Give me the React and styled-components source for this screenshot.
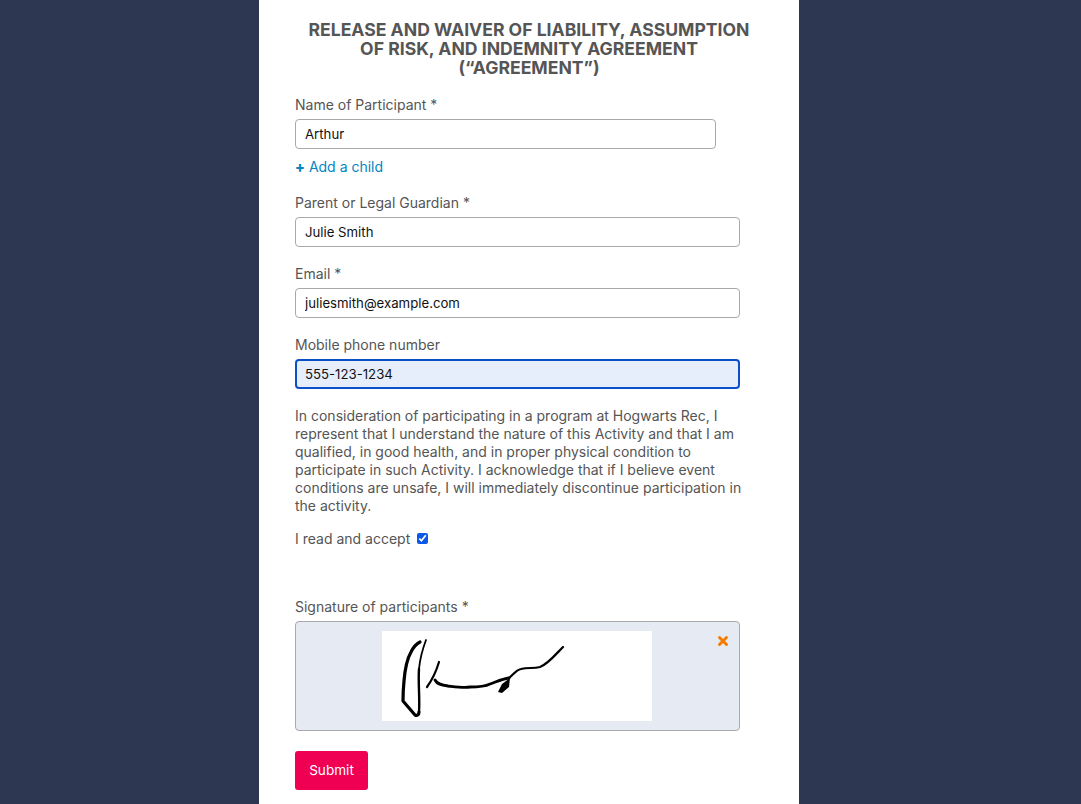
import { useState } from 'react';
import styled, { createGlobalStyle } from 'styled-components';

const GlobalStyle = createGlobalStyle`
  * {
    box-sizing: border-box;
  }
  html, body {
    margin: 0;
    height: 100%;
  }
  body {
    background: #2d3752;
    font-family: Inter, "Liberation Sans", sans-serif;
    overflow: hidden;
  }
`;

const Page = styled.div`
  display: flex;
  justify-content: center;
  height: 804px;
  padding-right: 23px;
  overflow: hidden;
`;

const Card = styled.form`
  width: 540px;
  background: #fff;
  padding: 20px 36px 0;
`;

const Title = styled.h1`
  margin: 0 0 19px;
  padding: 0 6px;
  font-size: 17.6px;
  line-height: 19px;
  font-weight: 700;
  text-align: center;
  color: #555;
`;

const Body = styled.div`
  padding-right: 23px;
`;

const Field = styled.div`
  margin-bottom: 18px;
`;

const Label = styled.label`
  display: block;
  font-size: 14px;
  line-height: 18px;
  color: #555;
  margin-bottom: 5px;
`;

const Input = styled.input`
  display: block;
  width: ${(p) => (p.$short ? '421px' : '100%')};
  height: 30px;
  padding: 0 ${(p) => (p.$active ? 8 : 9)}px;
  font-family: inherit;
  font-size: 13.2px;
  color: #111;
  background: ${(p) => (p.$active ? '#e6edfb' : '#fff')};
  border: ${(p) => (p.$active ? '2px solid #0b50c8' : '1px solid #a9a9a9')};
  border-radius: 4px;
  outline: none;
`;

const AddChild = styled.a`
  display: block;
  margin-top: 9px;
  font-size: 14px;
  line-height: 18px;
  color: #0286c3;
  text-decoration: none;
  b {
    font-size: 14.5px;
    font-weight: 800;
  }
`;

const Terms = styled.p`
  margin: 0 -4px 15px 0;
  font-size: 14px;
  line-height: 18px;
  color: #555;
`;

const Accept = styled.label`
  display: flex;
  align-items: center;
  gap: 7px;
  font-size: 14px;
  line-height: 18px;
  color: #555;
  margin-bottom: 50px;
  input {
    width: 11px;
    height: 11px;
    margin: 0 0 2px;
    accent-color: #0b57e8;
  }
`;

const SignatureBox = styled.div`
  position: relative;
  display: flex;
  justify-content: center;
  height: 110px;
  padding: 9px 1px 0 0;
  background: #e6eaf3;
  border: 1px solid #a9a9a9;
  border-radius: 4px;
`;

const SignatureImage = styled.svg`
  display: block;
  width: 270px;
  height: 90px;
  background: #fff;
`;

const Clear = styled.button`
  position: absolute;
  top: 13px;
  right: 10px;
  width: 12px;
  height: 12px;
  padding: 0;
  border: 0;
  background: none;
  display: flex;
`;

const Submit = styled.button`
  display: block;
  margin-top: 20px;
  width: 73px;
  height: 39px;
  padding: 0 0 1px;
  border: 0;
  border-radius: 3px;
  background: #ef0052;
  color: #fff;
  font-family: inherit;
  font-size: 13.6px;
`;

const App = () => {
  const [accepted, setAccepted] = useState(true);

  return (
    <Page>
      <GlobalStyle />
      <Card onSubmit={(e) => e.preventDefault()}>
        <Title>
          RELEASE AND WAIVER OF LIABILITY, ASSUMPTION OF RISK, AND INDEMNITY AGREEMENT (“AGREEMENT”)
        </Title>
        <Body>
          <Field>
            <Label>Name of Participant *</Label>
            <Input $short defaultValue="Arthur" />
            <AddChild href="#">
              <b>+</b> Add a child
            </AddChild>
          </Field>
          <Field>
            <Label>Parent or Legal Guardian *</Label>
            <Input defaultValue="Julie Smith" />
          </Field>
          <Field>
            <Label>Email *</Label>
            <Input defaultValue="juliesmith@example.com" />
          </Field>
          <Field>
            <Label>Mobile phone number</Label>
            <Input $active defaultValue="555-123-1234" />
          </Field>
          <Terms>
            In consideration of participating in a program at Hogwarts Rec, I represent that I
            understand the nature of this Activity and that I am qualified, in good health, and in
            proper physical condition to participate in such Activity. I acknowledge that if I
            believe event conditions are unsafe, I will immediately discontinue participation in the
            activity.
          </Terms>
          <Accept>
            I read and accept
            <input
              type="checkbox"
              checked={accepted}
              onChange={(e) => setAccepted(e.target.checked)}
            />
          </Accept>
          <Label>Signature of participants *</Label>
          <SignatureBox>
            <SignatureImage viewBox="0 0 270 90" fill="none" stroke="#000" strokeLinecap="round" strokeLinejoin="round">
              <path strokeWidth="1.8" d="M44 9C41 17 38 27 37 38" />
              <path strokeWidth="2.4" d="M37 38C36 52 38 68 37 81" />
              <path strokeWidth="3.2" d="M37 81C37 84 35 85 33 84L21 70C21 66 21 60 22 50C23 38 25 28 29 21C31 17 34 13 38 11" />
              <path strokeWidth="2.2" d="M57 31C54 41 50 49 45 56" />
              <path strokeWidth="2.8" d="M53 49C55 53 59 54 66 55C75 56 82 57 88 56C96 56 102 56 108 53C114 51 120 48 127 47" />
              <path strokeWidth="2.2" d="M127 47C131 44 134 39 139 38C146 36 151 38 158 36C166 33 174 23 181 16" />
              <path fill="#000" stroke="none" d="M128 47L127 56L120 62L116 61L120 53Z" />
            </SignatureImage>
            <Clear type="button" aria-label="Clear signature">
              <svg width="12" height="12" viewBox="0 0 12 12" stroke="#f57c00" strokeWidth="3" strokeLinecap="round">
                <path d="M2.5 2.5L9.5 9.5M9.5 2.5L2.5 9.5" />
              </svg>
            </Clear>
          </SignatureBox>
          <Submit type="submit">Submit</Submit>
        </Body>
      </Card>
    </Page>
  );
};

export default App;
